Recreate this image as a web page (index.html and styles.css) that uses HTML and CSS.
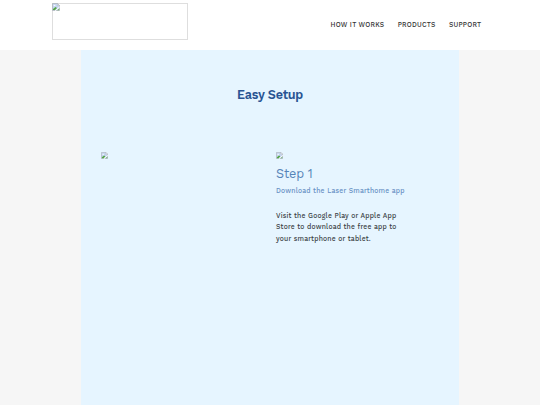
FILE: index.html
```html
<!DOCTYPE html>
<html lang="en">
<head>
<meta charset="utf-8">
<title>Easy Setup</title>
<link rel="stylesheet" href="styles.css">
</head>
<body>
<svg width="0" height="0" class="defs">
  <symbol id="missing" viewBox="0 0 8 8">
    <path d="M.5.5h5l2 2v5h-7z" fill="#c5d5f0" stroke="#a9afb5" stroke-width=".7"/>
    <path d="M5.5.5v2h2z" fill="#fff" stroke="#a9afb5" stroke-width=".5"/>
    <path d="M1.5 3q0-1 1-1t1 1z" fill="#fff"/>
    <path d="M1 7V6l2.5-2L5 5 3 7z" fill="#55a545"/>
    <path d="M3.2 7.8l4.6-4" stroke="#fff" stroke-width="1"/>
    <path d="M5.2 7.2l2-1.7v1.7z" fill="#69ad5d"/>
  </symbol>
</svg>
<header class="header">
  <a class="logo"><svg class="missing"><use href="#missing"/></svg></a>
  <nav class="nav">
    <a>HOW IT WORKS</a>
    <a>PRODUCTS</a>
    <a>SUPPORT</a>
  </nav>
</header>
<main class="content">
  <h1>Easy Setup</h1>
  <div class="columns">
    <div class="visual"><svg class="missing"><use href="#missing"/></svg></div>
    <section class="step">
      <svg class="missing"><use href="#missing"/></svg>
      <h2>Step 1</h2>
      <h3>Download the Laser Smarthome app</h3>
      <p>Visit the Google Play or Apple App<br>Store to download the free app to<br>your smartphone or tablet.</p>
    </section>
  </div>
</main>
</body>
</html>
```
FILE: styles.css
```css
* { box-sizing: border-box; }
body {
  margin: 0;
  height: 405px;
  overflow: hidden;
  background: #f6f6f6;
  font-family: "Work Sans", Inter, "Liberation Sans", sans-serif;
  white-space: nowrap;
}
.defs, .missing { display: block; }
.missing { width: 7px; height: 7px; margin-bottom: 1px; }
.logo .missing { width: 8px; height: 8px; margin: -1px 0 0 -1px; }
.defs { position: absolute; }
.header {
  display: flex;
  justify-content: space-between;
  height: 50px;
  padding: 3px 58.5px 0 52px;
  background: #fff;
}
.logo { width: 136px; height: 37px; border: 1px solid #dedede; }
.nav {
  display: flex;
  gap: 13.3px;
  padding-top: 17px;
  font-size: 6.7px;
  line-height: 10px;
  font-weight: 500;
  letter-spacing: .24px;
  color: #333;
}
.content {
  width: 378px;
  height: 355px;
  margin: 0 auto;
  padding: 36px 20px 0;
  background: #e6f5ff;
}
h1, h2, h3, p { margin: 0; }
h1 {
  font-size: 12.6px;
  line-height: 18px;
  font-weight: 600;
  letter-spacing: -.25px;
  text-align: center;
  color: #285493;
}
.columns { display: grid; grid-template-columns: 175px 1fr; margin-top: 48px; }
h2 {
  margin-top: 5.6px;
  font-size: 12.6px;
  line-height: 17px;
  font-weight: 400;
  letter-spacing: -.15px;
  color: #5584b8;
}
h3 {
  margin-top: 4px;
  font-size: 6.8px;
  line-height: 11px;
  font-weight: 500;
  letter-spacing: .2px;
  color: #6790c4;
}
p {
  margin-top: 14.4px;
  font-size: 6.8px;
  line-height: 11.4px;
  font-weight: 500;
  letter-spacing: .2px;
  color: #3a3f45;
}
```
